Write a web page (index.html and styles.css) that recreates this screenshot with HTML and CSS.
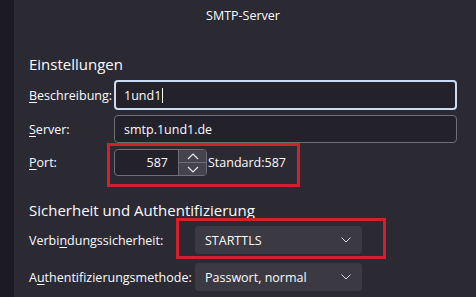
FILE: index.html
```html
<!DOCTYPE html>
<html lang="de">
<head>
    <meta charset="UTF-8">
    <link rel="stylesheet" href="styles.css">
    <title>SMTP-Server</title>
</head>
<body>
    <div class="leiste"></div>
    <main class="dialog">
        <h1 class="titel">SMTP-Server</h1>

        <h2 class="gruppe">Einstellungen</h2>
        <div class="formular">
            <label class="feldname"><u>B</u>eschreibung:</label>
            <div class="eingabe fokus">1und1<span class="cursor"></span></div>

            <label class="feldname"><u>S</u>erver:</label>
            <div class="eingabe">smtp.1und1.de</div>

            <label class="feldname"><u>P</u>ort:</label>
            <div class="portzeile markiert port-markierung">
                <div class="portfeld">
                    <span class="portwert">587</span>
                    <div class="spinner">
                        <span class="pfeil">
                            <svg width="12" height="7" viewBox="0 0 12 7"><path d="M1 6 L6 1 L11 6" fill="none" stroke="#e8e8ec" stroke-width="1.2"/></svg>
                        </span>
                        <span class="pfeil">
                            <svg width="12" height="7" viewBox="0 0 12 7"><path d="M1 1 L6 6 L11 1" fill="none" stroke="#e8e8ec" stroke-width="1.2"/></svg>
                        </span>
                    </div>
                </div>
                <span class="standard">Standard:587</span>
            </div>
        </div>

        <h2 class="gruppe zweite">Sicherheit und Authentifizierung</h2>
        <div class="formular breit">
            <label class="feldname">Verbi<u>n</u>dungssicherheit:</label>
            <div class="auswahl markiert tls-markierung">
                <span>STARTTLS</span>
                <svg width="10" height="6" viewBox="0 0 10 6"><path d="M0.5 0.5 L5 5 L9.5 0.5" fill="none" stroke="#d8d8dc" stroke-width="1"/></svg>
            </div>

            <label class="feldname">A<u>u</u>thentifizierungsmethode:</label>
            <div class="auswahl">
                <span>Passwort, normal</span>
                <svg width="10" height="6" viewBox="0 0 10 6"><path d="M0.5 0.5 L5 5 L9.5 0.5" fill="none" stroke="#d8d8dc" stroke-width="1"/></svg>
            </div>
        </div>
    </main>
</body>
</html>
```

FILE: styles.css
```css
body {
    margin: 0;
    height: 297px;
    display: flex;
    background: #1c1b22;
    font-family: 'Open Sans', 'Noto Sans', sans-serif;
    font-size: 12.5px;
    color: #fbfbfe;
    overflow: hidden;
}

.leiste {
    width: 14px;
}

.dialog {
    flex: 1;
    background: #2b2a33;
    padding: 0 19px 0 15px;
}

.titel {
    margin: 7px 0 0;
    font-size: 12.5px;
    font-weight: normal;
    text-align: center;
    line-height: 18px;
}

.gruppe {
    margin: 29px 0 6px;
    font-size: 15px;
    font-weight: normal;
    line-height: 20px;
}

.gruppe.zweite {
    margin-top: 24px;
    margin-bottom: 6px;
}

.formular {
    display: grid;
    grid-template-columns: 85px 1fr;
    row-gap: 5px;
    align-items: center;
}

.formular.breit {
    grid-template-columns: 166px 167px;
    row-gap: 9px;
}

.feldname u {
    text-decoration-thickness: 1px;
    text-underline-offset: 2px;
}

.eingabe {
    height: 28px;
    box-sizing: border-box;
    border: 1px solid #6f6e75;
    border-radius: 4px;
    background: #23222b;
    padding-left: 9px;
    display: flex;
    align-items: center;
}

.eingabe.fokus {
    height: 30px;
    border: 2px solid #c9dcf3;
    padding-left: 8px;
}

.cursor {
    display: inline-block;
    width: 1px;
    height: 15px;
    background: #fbfbfe;
    margin-left: 1px;
}

.portzeile {
    display: flex;
    align-items: center;
    margin-top: 1px;
    justify-self: start;
}

.portfeld {
    display: flex;
    width: 93px;
    height: 27px;
    box-sizing: border-box;
    border: 1px solid #6f6e75;
    border-radius: 4px;
    background: #23222b;
    overflow: hidden;
}

.portwert {
    flex: 1;
    text-align: right;
    padding-right: 10px;
    line-height: 25px;
}

.spinner {
    width: 27px;
    display: flex;
    flex-direction: column;
    border-left: 1px solid #6f6e75;
}

.pfeil {
    flex: 1;
    display: flex;
    align-items: center;
    justify-content: center;
    background: #45444c;
}

.pfeil + .pfeil {
    border-top: 1px solid #6f6e75;
}

.standard {
    margin-left: 1px;
}

.auswahl {
    height: 28px;
    border-radius: 4px;
    background: #3b3a42;
    display: flex;
    align-items: center;
    justify-content: space-between;
    padding: 0 11px 0 10px;
}

/* rote Markierungen aus dem Screenshot */
.markiert {
    position: relative;
}

.markiert::after {
    content: "";
    position: absolute;
    border: 3px solid #d3202c;
    pointer-events: none;
}

.port-markierung::after {
    top: -6px;
    left: -7px;
    right: -14px;
    bottom: -11px;
}

.tls-markierung::after {
    top: -8px;
    left: -19px;
    right: -24px;
    bottom: -5px;
}
```
